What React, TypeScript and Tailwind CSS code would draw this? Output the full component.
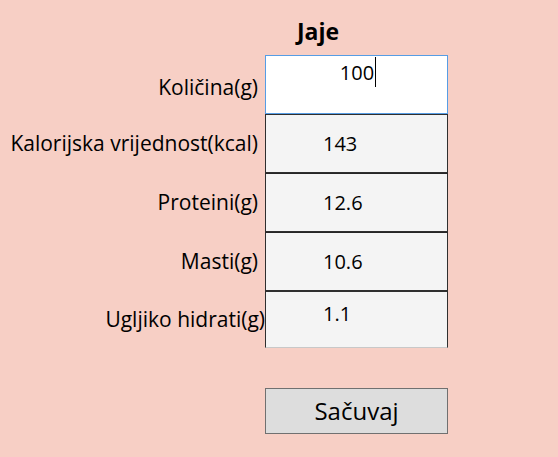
import React from 'react';

const rows = [
  { label: 'Kalorijska vrijednost(kcal)', value: '143' },
  { label: 'Proteini(g)', value: '12.6' },
  { label: 'Masti(g)', value: '10.6' },
];

export default function App() {
  return (
    <div className="w-[558px] h-[457px] overflow-hidden bg-[#F7CFC5] text-black font-['Open_Sans',sans-serif]">
      <div className="flex justify-center pl-[78px] pt-[16px] h-[55px]">
        <h1 className="text-[23px] font-bold leading-[31px]">Jaje</h1>
      </div>

      <div className="grid grid-cols-[265px_183px]">
        {/* Kolicina */}
        <div className="flex items-center justify-end pr-[7px] pt-[6px] h-[59px] text-[21px]">
          Količina(g)
        </div>
        <div className="h-[59px] bg-white border border-[#569DE5] flex justify-center">
          <div className="flex items-start pt-[3px] pl-[3px] text-[20px] leading-[27px]">
            <span>100</span>
            <span className="ml-[1px] mt-[-2px] w-[1px] h-[30px] bg-black" />
          </div>
        </div>

        {rows.map((r, i) => (
          <React.Fragment key={r.label}>
            <div className="flex items-center justify-end pr-[7px] h-[59px] text-[21px] whitespace-nowrap">
              {r.label}
            </div>
            <div
              className={
                'h-[59px] bg-[#F4F4F4] border border-[#2f2f2f] flex items-center pl-[57px] text-[20px] ' +
                (i > 0 ? 'border-t-[#262626]' : '')
              }
            >
              {r.value}
            </div>
          </React.Fragment>
        ))}

        <div className="flex items-center justify-end pr-0 h-[57px] text-[21px] whitespace-nowrap">
          Ugljiko hidrati(g)
        </div>
        <div className="h-[57px] bg-[#F4F4F4] border border-[#2f2f2f] border-b-[#c8c8c8] pl-[57px] pt-[8px] text-[20px] leading-[27px]">
          1.1
        </div>
      </div>

      <div className="grid grid-cols-[265px_183px] mt-[40px]">
        <div />
        <button className="h-[46px] bg-[#DDDDDD] border border-[#707070] text-[24px] leading-none">
          Sačuvaj
        </button>
      </div>
    </div>
  );
}
